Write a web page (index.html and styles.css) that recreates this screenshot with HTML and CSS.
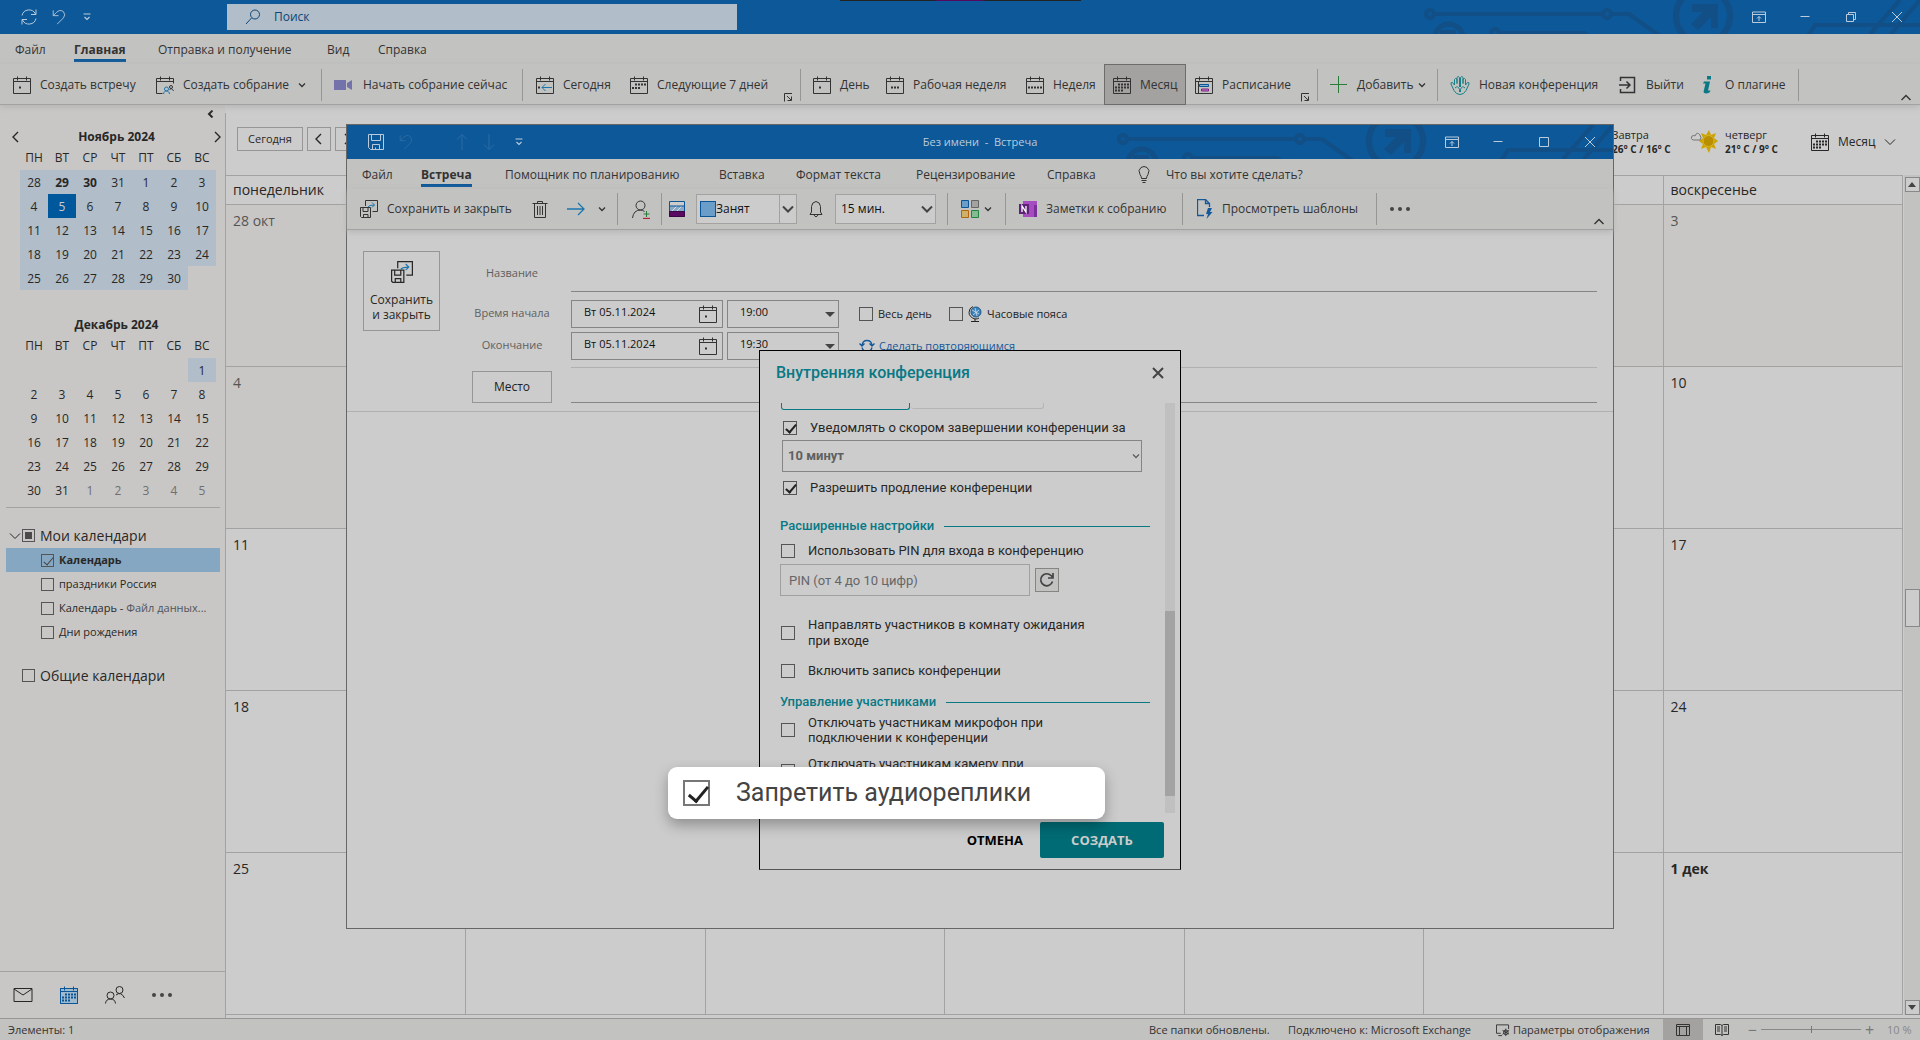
FILE: index.html
```html
<!DOCTYPE html>
<html lang="ru">
<head>
<meta charset="utf-8">
<title>Календарь</title>
<link rel="stylesheet" href="styles.css">
</head>
<body>
<svg class="sprite" aria-hidden="true">
  <defs>
    <g id="cal-frame"><path d="M.5 2.500h17v15H.5zM.5 5.500h17M4.500.500v4M13.500.500v4"/></g>
    <symbol id="cal-dot" viewBox="0 0 18 18"><use href="#cal-frame"/><path class="solid" d="M6 10.500h2v2H6z"/></symbol>
    <symbol id="cal-today" viewBox="0 0 18 18"><use href="#cal-frame"/><path class="solid" d="M2 10.500h2v2H2z"/><path class="accent" d="M16 11.500H6M9.500 8 6 11.500 9.500 15"/></symbol>
    <symbol id="cal-next" viewBox="0 0 18 18"><use href="#cal-frame"/><path class="solid" d="M5 7.500h2v2H5zM8 7.500h2v2H8zM11 7.500h2v2h-2zM14 7.500h2v2h-2zM2 11h2v2H2zM5 11h2v2H5zM8 11h2v2H8z"/></symbol>
    <symbol id="cal-work" viewBox="0 0 18 18"><use href="#cal-frame"/><path class="solid" d="M5 10.500h2v2H5zM8 10.500h2v2H8zM11 10.500h2v2h-2z"/></symbol>
    <symbol id="cal-week" viewBox="0 0 18 18"><use href="#cal-frame"/><path class="solid" d="M2 10.500h2v2H2zM5 10.500h2v2H5zM8 10.500h2v2H8zM11 10.500h2v2h-2zM14 10.500h2v2h-2z"/></symbol>
    <symbol id="cal-month" viewBox="0 0 18 18"><use href="#cal-frame"/><path class="solid" d="M5 7.500h2v2H5zM8 7.500h2v2H8zM11 7.500h2v2h-2zM14 7.500h2v2h-2zM2 10.500h2v2H2zM5 10.500h2v2H5zM8 10.500h2v2H8zM11 10.500h2v2h-2zM14 10.500h2v2h-2zM2 13.500h2v2H2zM5 13.500h2v2H5zM8 13.500h2v2H8z"/></symbol>
    <symbol id="cal-people" viewBox="0 0 18 18"><path d="M6.500 17.500H.5v-15h17v5M.5 5.500h17M4.500.500v4M13.500.500v4"/><g class="accent"><circle cx="10.500" cy="13" r="2"/><path d="M7.500 18c0-4 6-4 6 0"/></g><circle cx="15" cy="11" r="1.500"/><path d="M13.500 14c1-2 3-1.500 4 1"/></symbol>
    <symbol id="cal-list" viewBox="0 0 18 18"><use href="#cal-frame"/><path d="M3.500 5.500v12"/><path d="M4.500 8.500h9v2h-9z" fill="#7fb0d8" stroke="#0a5596"/><path d="M6.500 13h7v2h-7z" fill="#c27cc6" stroke="#7a2380"/></symbol>
    <symbol id="camera" viewBox="0 0 20 18"><path fill="#7472ab" stroke="none" d="M0 4h12v10H0zM13 7l5-3v10l-5-3z"/></symbol>
    <symbol id="plus" viewBox="0 0 18 18"><path stroke="#2a7c3b" d="M8.500 0v17M0 8.500h17"/></symbol>
    <symbol id="hands" viewBox="0 0 20 20"><g stroke="#187f86"><path d="M9.500 9V2.500q-1.500-2-2.500 0V9M7 8V4q-1.500-1.500-2.500.5V10L2.500 7.500Q.5 7 1 9l3 6.500q2 4 6 4t6-4L19 9q.5-2-1.500-1.500L15.500 10V4.500Q14.500 2.500 13 4v4M13 9V2.500q-1-2-2.500 0V12M9.500 9v3"/><path d="M5 13q3-3 4.500 1.500V17M15 13q-3-3-4.500 1.500V17"/></g></symbol>
    <symbol id="exit" viewBox="0 0 18 18"><path d="M1.500 5V1.500h14v15h-14V13M0 9h11M7.500 5.500 11 9l-3.500 3.500" stroke-width="1.500"/></symbol>
    <symbol id="info" viewBox="0 0 18 18"><path fill="#087985" stroke="none" d="M9 0h4v3.500H9zM6 5.500h6l-2 9h2.500l-1 2q-5 2-6-.5l2-8.500H5z"/></symbol>
    <symbol id="launcher" viewBox="0 0 9 9"><path d="M.5 8.500v-8H8M3 3l4 4M7.500 3.500v4h-4"/></symbol>
    <symbol id="chev-down" viewBox="0 0 8 8"><path d="M1 2.500 4 5.500 7 2.500" stroke-width="1.300"/></symbol>
    <symbol id="chev-big" viewBox="0 0 12 12"><path d="M1 3.500 6 8.500 11 3.500"/></symbol>
    <symbol id="chev-up" viewBox="0 0 12 12"><path d="M1.500 8 6 3.500 10.500 8" stroke-width="1.400"/></symbol>
    <symbol id="chev-left" viewBox="0 0 12 12"><path d="M8 1 3 6l5 5" stroke-width="1.400"/></symbol>
    <symbol id="chev-bold" viewBox="0 0 8 8"><path d="M5.500.500 2 4l3.500 3.500" stroke-width="2"/></symbol>
    <symbol id="chev-right" viewBox="0 0 12 12"><path d="M4 1l5 5-5 5" stroke-width="1.400"/></symbol>
    <symbol id="sync" viewBox="0 0 18 18"><path d="M2 7.500A7.200 7.200 0 0 1 15.500 6M16 10.500A7.200 7.200 0 0 1 2.500 12M16 1.500v5h-5M2 16.500v-5h5"/></symbol>
    <symbol id="undo" viewBox="0 0 16 18"><path d="M1.500 1.500v6h6M1.500 7.500 5 4q4-4 8-1 3 3.500 0 7l-7 7"/></symbol>
    <symbol id="customize" viewBox="0 0 8 8"><path d="M.5 1h7M1.500 4 4 6.500 6.500 4" stroke-width="1.200"/></symbol>
    <symbol id="search" viewBox="0 0 16 16"><circle cx="10" cy="5.500" r="4.500"/><path d="M6.500 9 1 15"/></symbol>
    <symbol id="ribbon-mode" viewBox="0 0 14 12"><path d="M.5 1h13v10.500H.5zM.5 3.500h13M7 10V5.500M5 7.500l2-2 2 2"/></symbol>
    <symbol id="minimize" viewBox="0 0 12 12"><path d="M1.500 5.500h9"/></symbol>
    <symbol id="restore" viewBox="0 0 12 12"><path d="M1.500 3.500h7v7h-7zM3.500 3.500v-2h7v7h-2"/></symbol>
    <symbol id="maximize" viewBox="0 0 12 12"><path d="M1.500 1.500h9v9h-9z"/></symbol>
    <symbol id="close" viewBox="0 0 12 12"><path d="M1 1l10 10M11 1 1 11"/></symbol>
    <symbol id="floppy" viewBox="0 0 18 18"><path d="M1.500 1.500h15v15h-13l-2-2zM4.500 1.500v6h9v-6M5.500 16.500v-5h7v5M8.500 16.500v-2"/></symbol>
    <symbol id="save-close" viewBox="0 0 18 18"><path d="M5.500 6V.500h12v11h-5M.5 7.500h10v10h-9l-1-1zM3 7.500v4h5v-4M3.500 17.500v-3h4.500v3"/><path class="accent" d="M8 7q1-2 6.500-2M12 2.500 14.500 5 12 7.500"/></symbol>
    <symbol id="trash" viewBox="0 0 16 18"><path d="M.5 3.500h15M5.500 3.500v-2h5v2M2.500 3.500v14h11v-14M5.500 6v9M8 6v9M10.500 6v9"/></symbol>
    <symbol id="arrow-right" viewBox="0 0 18 18"><path class="accent" d="M0 9h17M11 3l6 6-6 6" stroke-width="1.300"/></symbol>
    <symbol id="arrow-up" viewBox="0 0 14 18"><path d="M7 17V1.500M2 6.500l5-5 5 5"/></symbol>
    <symbol id="arrow-down" viewBox="0 0 14 18"><path d="M7 1v15.500M2 11.500l5 5 5-5"/></symbol>
    <symbol id="person-add" viewBox="0 0 18 19"><circle cx="8.500" cy="5.500" r="4.500"/><path d="M.5 18q1-8 8-8 2 0 4 1.500"/><path stroke="#2a7c3b" d="M14.500 11v6M11.500 14h6"/><path stroke="#b32430" d="M11 18.500h7" stroke-width="1.300"/></symbol>
    <symbol id="stripes" viewBox="0 0 16 16"><path fill="#ccc" stroke="#0a5596" d="M.5.500h15v15H.5z"/><path fill="#89a9c7" stroke="none" d="M1 5h14v5H1z"/><path stroke="#d4dbe2" d="M3 10l5-5M8 10l5-5"/><path fill="#5a0a60" stroke="#3c0545" d="M.5 10.500h15v5H.5z"/><path stroke="#0a5596" d="M1 5h14"/></symbol>
    <symbol id="bell" viewBox="0 0 14 18"><path d="M1 14.500h12L11.500 12V6.500Q11 2 7 1.500 3 2 2.500 6.500V12zM5 15q2 3.500 4 0"/></symbol>
    <symbol id="squares" viewBox="0 0 18 18"><path fill="#6b9dc9" stroke="#0a5596" d="M.5.500h7v7h-7z"/><path fill="#a3a2a1" stroke="#666" d="M10.500.500h7v7h-7z"/><path fill="#cfb06a" stroke="#b2660c" d="M.5 10.500h7v7h-7z"/><path fill="#86bb92" stroke="#22843c" d="M10.500 10.500h7v7h-7z"/></symbol>
    <symbol id="onenote" viewBox="0 0 18 18"><g stroke="none"><path fill="#a74bc0" d="M4 1h14v16H4z"/><path fill="#7b2f9a" d="M15 5h3v12h-3z"/><path fill="#5e2078" d="M0 4h10v10H0z"/></g><path stroke="#fff" d="M3 12V6l4 6V6" stroke-width="1.300"/></symbol>
    <symbol id="template" viewBox="0 0 16 20"><path stroke="#15589a" d="M7 16.500H.5V.5h8l4 4V8M8.500.500v4h4" stroke-width="1.300"/><path fill="#15589a" stroke="none" d="M11 9h4l-2 4h2.500L9.500 20l1.500-5H9z"/></symbol>
    <symbol id="bulb" viewBox="0 0 12 18"><path d="M3.500 12.500q0-2-1.500-4Q-.5 4 3 1.500q3-2 6 0Q12.500 4 10 8.500q-1.500 2-1.500 4zM3.500 14.500h5M4.500 16.500h3"/></symbol>
    <symbol id="globe" viewBox="0 0 14 16"><circle cx="8" cy="6" r="5" fill="#3d83bb" stroke="#215a8a"/><path stroke="#cfe0ee" d="M4 4l7 4M5 9l6-5M7 2l2 8" stroke-width=".8"/><path d="M5 .5Q1 2 1 6.500T7 13q3 0 4-1M7 13v2.500M3 15.500h8"/></symbol>
    <symbol id="recur" viewBox="0 0 16 16"><g stroke="#15589a" stroke-width="1.300"><path d="M3 7.500Q3.500 2.500 8 2.500t5 5M13 9.500q-1 4-5 4t-5-4M.5 5.500 3 8l2.500-2.500M10.500 5.500 13 8l2.500-2.500"/></g></symbol>
    <symbol id="refresh" viewBox="0 0 16 16"><path d="M13.500 9.500A6 6 0 1 1 12 3.500L14 5.500M14 1v5H9" stroke-width="1.700"/></symbol>
    <symbol id="mail" viewBox="0 0 20 16"><path d="M1 1.500h18v13H1zM1 2l9 6 9-6"/></symbol>
    <symbol id="nav-cal" viewBox="0 0 18 18"><path fill="#9fb9cd" d="M.5 2.500h17v15H.5z"/><use href="#cal-month"/></symbol>
    <symbol id="people" viewBox="0 0 20 18"><circle cx="5.500" cy="9.500" r="3.500"/><path d="M.5 17.500q.5-4.500 5-4.500t5 4.500"/><circle cx="14.500" cy="4" r="3.500"/><path d="M11 9q5-4 8.500 3"/></symbol>
    <symbol id="display" viewBox="0 0 15 14"><path d="M5 10.500H.5v-9h13V6M2.500 13h4"/><circle cx="10.500" cy="9.500" r="2.500"/><path d="M10.500 5.500v8M7 7.500l7 4M7 11.500l7-4"/></symbol>
    <symbol id="view-normal" viewBox="0 0 14 12"><path d="M.5.500h13v11H.5zM.5 2.500h13M3.500 2.500v9M10.500 2.500v9"/></symbol>
    <symbol id="view-read" viewBox="0 0 14 12"><path d="M7 1.500 5.500.500h-5v10h5L7 11.500l1.500-1h5V.500h-5zM7 1.500v10M2 3h3M2 5h3M2 7h3M9 3h3M9 5h3M9 7h3"/></symbol>
    <symbol id="sunny" viewBox="0 0 28 24"><path fill="#cca300" stroke="none" d="M19 0l2 5 5-2-2 5 4 3-4 3 2 5-5-2-2 6-3-6-5 2 2-5-4-3 4-3-2-5 5 2z"/><circle cx="18.500" cy="11" r="5.500" fill="#b98f00" stroke="#d8b62a"/><path stroke="#777" fill="#ccc" d="M3 10q-3-1-1-4 2-1 3 0Q7 1 10 5q2 3 0 5z"/></symbol>
    <symbol id="circuit" viewBox="0 0 500 34"><g fill="none" stroke="#114f86" stroke-width="4"><circle cx="10" cy="14" r="4"/><path d="M14 14h169M191 14h18l31 22"/><circle cx="187" cy="14" r="4"/><circle cx="29" cy="38" r="14" stroke-width="5"/><path d="M22 42V32h14"/><circle cx="75" cy="33" r="4"/><path d="M79 33h85l12 8M388 36l7-11h105M450 34 480 0M471 34 500 0"/><circle cx="283" cy="16" r="27" stroke-width="6"/></g><path fill="#114f86" d="M272 4h26v24h-7v-11l-13 13-7-6 12-12h-11z"/></symbol>
  </defs>
</svg>

<div class="app">
  <header class="titlebar">
    <svg class="circuit"><use href="#circuit"/></svg>
    <span class="notch"><i></i></span>
    <div class="quick">
      <button aria-label="Обновить"><svg class="i18"><use href="#sync"/></svg></button>
      <button aria-label="Отменить"><svg class="i16"><use href="#undo"/></svg></button>
      <button aria-label="Настройка панели"><svg class="i8"><use href="#customize"/></svg></button>
    </div>
    <label class="searchbox"><svg class="i16"><use href="#search"/></svg><input type="text" aria-label="Поиск" placeholder="Поиск"></label>
    <div class="controls">
      <button aria-label="Параметры ленты"><svg class="i14"><use href="#ribbon-mode"/></svg></button>
      <button aria-label="Свернуть"><svg class="i12"><use href="#minimize"/></svg></button>
      <button aria-label="Восстановить"><svg class="i12"><use href="#restore"/></svg></button>
      <button aria-label="Закрыть"><svg class="i12"><use href="#close"/></svg></button>
    </div>
  </header>

  <nav class="tabs main-tabs">
    <button>Файл</button><button class="current">Главная</button><button>Отправка и получение</button><button>Вид</button><button>Справка</button>
  </nav>
  <div class="ribbon main-ribbon">
    <button><svg class="i18"><use href="#cal-dot"/></svg>Создать встречу</button>
    <button><svg class="i18"><use href="#cal-people"/></svg>Создать собрание<svg class="i8"><use href="#chev-down"/></svg></button>
    <i class="sep"></i>
    <button><svg class="i20"><use href="#camera"/></svg>Начать собрание сейчас</button>
    <i class="sep"></i>
    <button><svg class="i18"><use href="#cal-today"/></svg>Сегодня</button>
    <button><svg class="i18"><use href="#cal-next"/></svg>Следующие 7 дней</button>
    <button class="launch" aria-label="Перейти"><svg class="i9"><use href="#launcher"/></svg></button>
    <i class="sep"></i>
    <button><svg class="i18"><use href="#cal-dot"/></svg>День</button>
    <button><svg class="i18"><use href="#cal-work"/></svg>Рабочая неделя</button>
    <button><svg class="i18"><use href="#cal-week"/></svg>Неделя</button>
    <button class="pressed"><svg class="i18"><use href="#cal-month"/></svg>Месяц</button>
    <button class="inset"><svg class="i18"><use href="#cal-list"/></svg>Расписание</button>
    <button class="launch" aria-label="Упорядочить"><svg class="i9"><use href="#launcher"/></svg></button>
    <i class="sep"></i>
    <button><svg class="i18"><use href="#plus"/></svg>Добавить<svg class="i8 near"><use href="#chev-down"/></svg></button>
    <i class="sep"></i>
    <button><svg class="i20"><use href="#hands"/></svg>Новая конференция</button>
    <button><svg class="i18"><use href="#exit"/></svg>Выйти</button>
    <button><svg class="i18"><use href="#info"/></svg>О плагине</button>
    <i class="sep"></i>
    <button class="fold" aria-label="Свернуть ленту"><svg class="i12"><use href="#chev-up"/></svg></button>
  </div>

  <div class="body">
    <aside class="sidebar">
      <button class="collapse" aria-label="Свернуть область"><svg class="i8"><use href="#chev-bold"/></svg></button>
      <div class="month-head"><button aria-label="Назад"><svg class="i12"><use href="#chev-left"/></svg></button><h2>Ноябрь 2024</h2><button aria-label="Вперед"><svg class="i12"><use href="#chev-right"/></svg></button></div>
      <table class="mini">
        <thead><tr><th>ПН</th><th>ВТ</th><th>СР</th><th>ЧТ</th><th>ПТ</th><th>СБ</th><th>ВС</th></tr></thead>
        <tbody>
          <tr class="on"><td>28</td><td><b>29</b></td><td><b>30</b></td><td>31</td><td>1</td><td>2</td><td>3</td></tr>
          <tr class="on"><td>4</td><td class="today">5</td><td>6</td><td>7</td><td>8</td><td>9</td><td>10</td></tr>
          <tr class="on"><td>11</td><td>12</td><td>13</td><td>14</td><td>15</td><td>16</td><td>17</td></tr>
          <tr class="on"><td>18</td><td>19</td><td>20</td><td>21</td><td>22</td><td>23</td><td>24</td></tr>
          <tr class="on"><td>25</td><td>26</td><td>27</td><td>28</td><td>29</td><td>30</td><td class="off"></td></tr>
        </tbody>
      </table>
      <div class="month-head second"><h2>Декабрь 2024</h2></div>
      <table class="mini">
        <thead><tr><th>ПН</th><th>ВТ</th><th>СР</th><th>ЧТ</th><th>ПТ</th><th>СБ</th><th>ВС</th></tr></thead>
        <tbody>
          <tr><td></td><td></td><td></td><td></td><td></td><td></td><td class="mark">1</td></tr>
          <tr><td>2</td><td>3</td><td>4</td><td>5</td><td>6</td><td>7</td><td>8</td></tr>
          <tr><td>9</td><td>10</td><td>11</td><td>12</td><td>13</td><td>14</td><td>15</td></tr>
          <tr><td>16</td><td>17</td><td>18</td><td>19</td><td>20</td><td>21</td><td>22</td></tr>
          <tr><td>23</td><td>24</td><td>25</td><td>26</td><td>27</td><td>28</td><td>29</td></tr>
          <tr><td>30</td><td>31</td><td class="dim">1</td><td class="dim">2</td><td class="dim">3</td><td class="dim">4</td><td class="dim">5</td></tr>
        </tbody>
      </table>
      <div class="tree">
        <label class="group"><svg class="i12"><use href="#chev-big"/></svg><input type="checkbox" class="part">Мои календари</label>
        <label class="leaf chosen"><input type="checkbox" checked>Календарь</label>
        <label class="leaf"><input type="checkbox">праздники Россия</label>
        <label class="leaf"><input type="checkbox"><span>Календарь - <small>Файл данных...</small></span></label>
        <label class="leaf"><input type="checkbox">Дни рождения</label>
        <label class="group shared"><input type="checkbox">Общие календари</label>
      </div>
      <nav class="modules">
        <button aria-label="Почта"><svg class="i20"><use href="#mail"/></svg></button>
        <button class="blue" aria-label="Календарь"><svg class="i18"><use href="#nav-cal"/></svg></button>
        <button aria-label="Люди"><svg class="i20"><use href="#people"/></svg></button>
        <button class="dots" aria-label="Еще"><i></i><i></i><i></i></button>
      </nav>
    </aside>

    <main class="content">
      <div class="tools">
        <button class="box today-btn">Сегодня</button><button class="box" aria-label="Предыдущий"><svg class="i12"><use href="#chev-left"/></svg></button><button class="box" aria-label="Следующий"><svg class="i12"><use href="#chev-right"/></svg></button>
        <div class="forecast">
          <div class="day"><svg class="sun"><use href="#sunny"/></svg><p>Завтра<b>26° C / 16° C</b></p></div>
          <div class="day"><svg class="sun"><use href="#sunny"/></svg><p>четверг<b>21° C / 9° C</b></p></div>
          <button class="view"><svg class="i18"><use href="#cal-month"/></svg>Месяц<svg class="i12"><use href="#chev-big"/></svg></button>
        </div>
      </div>
      <div class="sheet">
        <table class="month">
          <thead><tr><th>понедельник</th><th></th><th></th><th></th><th></th><th></th><th>воскресенье</th></tr></thead>
          <tbody>
            <tr class="past"><td>28 окт</td><td></td><td></td><td></td><td></td><td></td><td>3</td></tr>
            <tr><td class="gone">4</td><td></td><td></td><td></td><td></td><td></td><td>10</td></tr>
            <tr><td>11</td><td></td><td></td><td></td><td></td><td></td><td>17</td></tr>
            <tr><td>18</td><td></td><td></td><td></td><td></td><td></td><td>24</td></tr>
            <tr><td>25</td><td></td><td></td><td></td><td></td><td></td><td><b>1 дек</b></td></tr>
          </tbody>
        </table>
        <div class="scroll"><button class="up" aria-label="Вверх"></button><span class="thumb"></span><button class="down" aria-label="Вниз"></button></div>
      </div>
    </main>
  </div>

  <footer class="status">
    <span>Элементы: 1</span><span>Все папки обновлены.</span><span>Подключено к: Microsoft Exchange</span>
    <button><svg class="i14"><use href="#display"/></svg>Параметры отображения</button>
    <button class="active" aria-label="Обычный"><svg class="i14"><use href="#view-normal"/></svg></button>
    <button class="read" aria-label="Чтение"><svg class="i14"><use href="#view-read"/></svg></button>
    <label class="zoom"><span>−</span><input type="range" aria-label="Масштаб" min="10" max="190" value="100"><span>+</span></label>
    <span class="pct">10 %</span>
  </footer>

  <section class="window">
    <header class="titlebar">
      <svg class="circuit"><use href="#circuit"/></svg>
      <div class="quick">
        <button aria-label="Сохранить"><svg class="i18"><use href="#floppy"/></svg></button>
        <button class="faded" aria-label="Отменить"><svg class="i16"><use href="#undo"/></svg></button>
        <button class="faded far" aria-label="Предыдущий элемент"><svg class="i14t"><use href="#arrow-up"/></svg></button>
        <button class="faded" aria-label="Следующий элемент"><svg class="i14t"><use href="#arrow-down"/></svg></button>
        <button aria-label="Настройка панели"><svg class="i8"><use href="#customize"/></svg></button>
      </div>
      <h1>Без имени&nbsp; -&nbsp; Встреча</h1>
      <div class="controls">
        <button aria-label="Параметры ленты"><svg class="i14"><use href="#ribbon-mode"/></svg></button>
        <button aria-label="Свернуть"><svg class="i12"><use href="#minimize"/></svg></button>
        <button aria-label="Развернуть"><svg class="i12"><use href="#maximize"/></svg></button>
        <button aria-label="Закрыть"><svg class="i12"><use href="#close"/></svg></button>
      </div>
    </header>
    <nav class="tabs win-tabs">
      <button>Файл</button><button class="current">Встреча</button><button>Помощник по планированию</button><button>Вставка</button><button>Формат текста</button><button>Рецензирование</button><button>Справка</button>
      <button class="tell"><svg class="bulb"><use href="#bulb"/></svg>Что вы хотите сделать?</button>
    </nav>
    <div class="ribbon win-ribbon">
      <button><svg class="i18"><use href="#save-close"/></svg>Сохранить и закрыть</button>
      <button aria-label="Удалить"><svg class="i16t"><use href="#trash"/></svg></button>
      <button aria-label="Переслать"><svg class="i18"><use href="#arrow-right"/></svg><svg class="i8 tight"><use href="#chev-down"/></svg></button>
      <i class="sep"></i>
      <button aria-label="Пригласить"><svg class="i18t"><use href="#person-add"/></svg></button>
      <i class="sep"></i>
      <span class="cell"><svg class="i16"><use href="#stripes"/></svg></span>
      <span class="combo busy"><i class="swatch"></i><select aria-label="Показать как"><option>Занят</option></select><svg class="i12"><use href="#chev-big"/></svg></span>
      <span class="cell"><svg class="i14t"><use href="#bell"/></svg></span>
      <span class="combo"><select aria-label="Напоминание"><option>15 мин.</option></select><svg class="i12"><use href="#chev-big"/></svg></span>
      <i class="sep"></i>
      <button aria-label="Категории"><svg class="i18"><use href="#squares"/></svg><svg class="i8 near"><use href="#chev-down"/></svg></button>
      <i class="sep"></i>
      <button><svg class="i18"><use href="#onenote"/></svg>Заметки к собранию</button>
      <i class="sep"></i>
      <button><svg class="tpl"><use href="#template"/></svg>Просмотреть шаблоны</button>
      <i class="sep"></i>
      <button class="dots" aria-label="Другие команды"><i></i><i></i><i></i></button>
      <button class="fold" aria-label="Свернуть ленту"><svg class="i12"><use href="#chev-up"/></svg></button>
    </div>
    <form class="form">
      <button type="button" class="box save"><svg class="i22"><use href="#save-close"/></svg>Сохранить<br>и закрыть</button>
      <div class="fields">
        <label for="subject">Название</label><input id="subject" class="line subject" type="text">
        <label for="start">Время начала</label>
        <div class="row">
          <span class="date"><input id="start" type="text" value="Вт 05.11.2024"><svg class="i18"><use href="#cal-dot"/></svg></span>
          <span class="time"><select aria-label="Время начала, часы"><option>19:00</option></select></span>
          <label class="tick"><input type="checkbox">Весь день</label>
          <label class="tick zone"><input type="checkbox"><svg class="globe"><use href="#globe"/></svg>Часовые пояса</label>
        </div>
        <label for="end">Окончание</label>
        <div class="row">
          <span class="date"><input id="end" type="text" value="Вт 05.11.2024"><svg class="i18"><use href="#cal-dot"/></svg></span>
          <span class="time"><select aria-label="Время окончания"><option>19:30</option></select></span>
          <a href="#" class="repeat"><svg class="i16"><use href="#recur"/></svg>Сделать повторяющимся</a>
        </div>
        <button type="button" class="box place">Место</button><input class="line where" type="text" aria-label="Место">
      </div>
    </form>
  </section>

  <section class="dialog" role="dialog" aria-labelledby="dlg-title">
    <header><h2 id="dlg-title">Внутренняя конференция</h2><button aria-label="Закрыть"><svg class="i12"><use href="#close"/></svg></button></header>
    <div class="pane">
      <div class="settings">
        <div class="segments"><i class="lit"></i><i></i></div>
        <label class="opt in"><input type="checkbox" checked>Уведомлять о скором завершении конференции за</label>
        <span class="minutes"><select aria-label="Минуты"><option>10 минут</option></select><svg class="i8"><use href="#chev-down"/></svg></span>
        <label class="opt in extend"><input type="checkbox" checked>Разрешить продление конференции</label>
        <h3>Расширенные настройки</h3>
        <label class="opt"><input type="checkbox">Использовать PIN для входа в конференцию</label>
        <div class="pin"><input type="text" placeholder="PIN (от 4 до 10 цифр)" aria-label="PIN"><button aria-label="Создать PIN"><svg class="i16"><use href="#refresh"/></svg></button></div>
        <label class="opt two"><input type="checkbox"><span>Направлять участников в комнату ожидания<br>при входе</span></label>
        <label class="opt rec"><input type="checkbox">Включить запись конференции</label>
        <h3 class="manage">Управление участниками</h3>
        <label class="opt mic"><input type="checkbox"><span>Отключать участникам микрофон при<br>подключении к конференции</span></label>
        <label class="opt cam"><input type="checkbox"><span>Отключать участникам камеру при</span></label>
      </div>
      <div class="track"><span></span></div>
    </div>
    <footer><button class="cancel">ОТМЕНА</button><button class="create">СОЗДАТЬ</button></footer>
  </section>

  <label class="callout"><input type="checkbox" checked>Запретить аудиореплики</label>
</div>
</body>
</html>
```
FILE: styles.css
```css
* { box-sizing: border-box; }
body { margin: 0; font: 12px/16px "Open Sans", "Noto Sans", sans-serif; color: #282726; background: #ccc; }
button, input, select { font: inherit; color: inherit; background: none; border: 0; margin: 0; padding: 0; }
button { display: flex; align-items: center; white-space: nowrap; text-align: left; }
h1, h2, h3, p { margin: 0; font-size: inherit; }
select { appearance: none; width: 100%; height: 100%; }
svg { flex: none; fill: none; stroke: currentColor; display: block; }
.solid { fill: currentColor; stroke: none; }
.accent { stroke: #1b76b0; }
.sprite { position: absolute; width: 0; height: 0; }
.i8 { width: 8px; height: 8px; } .i9 { width: 9px; height: 9px; }
.i12 { width: 12px; height: 12px; } .i14 { width: 14px; height: 14px; }
.i14t { width: 14px; height: 18px; } .i16 { width: 16px; height: 16px; }
.i16t { width: 16px; height: 18px; } .i18 { width: 18px; height: 18px; }
.i18t { width: 18px; height: 19px; } .i20 { width: 20px; height: 20px; } .i22 { width: 22px; height: 22px; }

input[type=checkbox] { appearance: none; flex: none; width: 14px; height: 14px; border: 1px solid #555; position: relative; }
input[type=checkbox]:checked::after { content: ""; position: absolute; left: 4px; top: 0; width: 4px; height: 9px; border: solid #222; border-width: 0 2px 2px 0; transform: rotate(40deg); }

.app { position: relative; display: flex; flex-direction: column; min-height: 100vh; overflow: hidden; }

.titlebar { position: relative; display: flex; align-items: center; height: 34px; background: #0d5898; color: #b9cbdc; }
.circuit { position: absolute; right: 0; top: 0; width: 500px; height: 34px; stroke: none; }
.notch { position: absolute; left: 840px; top: 0; width: 241px; height: 1px; background: #222; }
.notch i { display: block; width: 48px; height: 1px; margin-left: 96px; background: #550a60; }
.quick { display: flex; align-items: center; gap: 13px; padding-left: 20px; width: 227px; }
.quick .i8 { margin-left: 3px; }
.searchbox { display: flex; align-items: center; gap: 13px; width: 510px; height: 26px; padding-left: 18px; background: #b1bdc8; color: #0b4778; }
.searchbox input { flex: 1; }
.searchbox input::placeholder { color: #0b4778; opacity: 1; }
.controls { position: relative; display: flex; margin-left: auto; }
.controls button { width: 46px; height: 34px; justify-content: center; }

.tabs { display: grid; height: 30px; padding: 8px 0 0 15px; background: #c2c2c1; color: #333; }
.tabs button { height: 20px; justify-self: start; padding-bottom: 1px; border-bottom: 3px solid transparent; }
.tabs .current { font-weight: 700; border-color: #0d5898; }
.main-tabs { grid-template-columns: 59px 84px 169px 51px auto; }
.ribbon { position: relative; display: grid; align-items: center; height: 41px; padding-left: 13px; background: #c2c2c1; border-bottom: 1px solid #a3a2a1; box-shadow: 0 2px 6px #b4b4b4; color: #333; }
.ribbon button { gap: 9px; height: 40px; }
.ribbon .near { margin-left: -4px; }
.main-ribbon { grid-template-columns: 143px 165px 13px 188px 14px 94px 154px 16px 13px 73px 140px 78px 82px 115px 16px 13px 107px 13px 169px 79px 100px 14px 1fr; }
.sep { width: 1px; height: 32px; background: #979695; }
.ribbon .pressed { height: 41px; padding-left: 8px; background: #a3a2a1; border: 1px solid #6d6c6b; }
.ribbon .inset { padding-left: 9px; }
.ribbon .launch { padding-top: 25px; }
.ribbon .fold { justify-self: end; padding: 26px 8px 0 0; }

.body { flex: 1; display: grid; grid-template-columns: 225px 1fr; }
.sidebar { display: flex; flex-direction: column; background: #c8c7c6; }
.collapse { align-self: flex-end; margin: 5px 10px 0 0; height: 8px; }
.month-head { display: flex; align-items: center; justify-content: space-between; height: 16px; margin: 11px 2px 4px 10px; }
.month-head h2 { font-weight: 700; }
.second { justify-content: center; margin: 27px 2px 4px 10px; }
.mini { width: 196px; margin-left: 20px; border-collapse: collapse; table-layout: fixed; text-align: center; }
.mini th { height: 21px; padding: 1px 0 0; font-weight: 400; vertical-align: top; }
.mini td { height: 24px; padding: 1px 0 0; }
.mini .on, .mini .mark { background: #b1bdc8; }
.mini .off { background: #c8c7c6; }
.mini .today { background: #00589c; color: #ccc; }
.mini .dim { color: #706f6e; }
.tree { margin: 5px 5px 0 6px; padding-top: 15px; border-top: 1px solid #a3a2a1; flex: 1; }
.tree label { display: flex; align-items: center; }
.tree input[type=checkbox] { width: 13px; height: 13px; }
.tree input[type=checkbox]:checked::after { border-color: #444; border-width: 0 1px 1px 0; }
.group { height: 25px; gap: 5px; padding-left: 3px; font-size: 14px; line-height: 20px; }
.group .i12 { margin-right: -4px; }
.shared { margin-top: 19px; padding-left: 16px; }
.part::after { content: ""; position: absolute; inset: 2px; background: #4a4a4a; }
.leaf { height: 24px; gap: 5px; padding-left: 35px; font-size: 11px; }
.leaf small { font-size: 11px; color: #50555c; }
.chosen { background: #86a7c1; font-weight: 700; }
.modules { display: flex; align-items: center; gap: 27px; height: 47px; padding-left: 13px; border-top: 1px solid #a3a2a1; }
.modules .blue { color: #0a5596; }
.dots { gap: 4px; }
.ribbon .dots { gap: 4px; }
.dots i { width: 4px; height: 4px; border-radius: 2px; background: #444; }

.content { display: flex; flex-direction: column; margin-top: 8px; padding-bottom: 3px; border-left: 1px solid #a3a2a1; }
.tools { display: flex; height: 62px; padding: 14px 0 0 11px; gap: 4px; }
.box { height: 24px; width: 24px; justify-content: center; border: 1px solid #979695; }
.today-btn { width: 66px; font-size: 11px; }
.forecast { display: grid; grid-template-columns: 113px 121px 109px; align-items: center; height: 22px; margin-left: auto; font-size: 11px; }
.day { display: flex; align-items: center; gap: 7px; }
.day b { display: block; font-size: 10px; }
.day p { line-height: 15px; white-space: nowrap; }
.sun { width: 28px; height: 24px; }
.view { gap: 9px; font-size: 12px; }
.sheet { flex: 1; display: flex; gap: 1px; }
.month { flex: 1; width: 100%; border-collapse: collapse; table-layout: fixed; text-align: left; vertical-align: top; font-size: 14px; line-height: 20px; }
.month th { height: 29px; padding: 0 7px; font-weight: 400; border: solid #a3a2a1; border-width: 1px 1px 1px 0; }
.month td { height: 161px; padding: 6px 7px; vertical-align: top; border: solid #a3a2a1; border-width: 1px 1px 1px 0; }
.past, .gone { background: #c8c7c5; color: #555; }
.scroll { display: flex; flex-direction: column; justify-content: space-between; align-items: center; width: 16px; padding: 2px 0 0; background: #c2c2c1; }
.scroll button, .thumb { width: 15px; height: 15px; background: #ccc; border: 1px solid #888; justify-content: center; }
.scroll .thumb { height: 38px; margin-top: 24px; }
.up::after, .down::after { content: ""; border: 4px solid transparent; border-top: 0; border-bottom: 5px solid #444; }
.down::after { border-bottom: 0; border-top: 5px solid #444; }

.status { display: grid; grid-template-columns: 1141px 139px 208px 167px 40px 38px 146px 1fr; align-items: center; height: 22px; padding-left: 8px; background: #c2c2c1; border-top: 1px solid #979695; font-size: 11px; color: #333; white-space: nowrap; }
.status button { gap: 3px; height: 21px; }
.status .active { justify-content: center; background: #a3a2a1; }
.status .read { justify-content: center; }
.zoom { display: flex; align-items: center; justify-content: center; gap: 4px; height: 21px; font-size: 16px; color: #777; padding-right: 6px; }
.zoom input { appearance: none; width: 100px; height: 9px; background: linear-gradient(#888, #888) center / 100% 1px no-repeat; }
.zoom input::-webkit-slider-thumb { appearance: none; width: 1px; height: 7px; background: #777; }
.pct { color: #888; }

.window { position: absolute; left: 346px; right: 306px; top: 124px; height: 805px; background: #ccc; border: 1px solid #666; }
.window h1 { position: absolute; left: 0; right: 0; text-align: center; font-weight: 400; font-size: 11px; }
.window .quick { width: 240px; }
.window .faded { color: #2c6ca5; }
.window .far { margin-left: 28px; }
.window .quick .i8 { margin-left: 6px; }
.win-tabs { grid-template-columns: 59px 84px 214px 77px 120px 131px 91px auto; }
.tabs .tell { gap: 16px; }
.bulb { width: 12px; height: 18px; }
.win-ribbon { grid-template-columns: 172px 35px 50px 15px 29px 8px 27px 113px 26px 112px 14px 44px 14px 163px 15px 179px 14px 30px 1fr; }
.ribbon .tight { margin-left: 4px; }
.tpl { width: 16px; height: 20px; }
.combo { position: relative; display: flex; align-items: center; width: 101px; height: 30px; border: 1px solid #a3a2a1; background: #ccc; color: #111; padding-left: 5px; }
.combo .i12 { position: absolute; right: 2px; stroke-width: 2; color: #444; }
.busy { padding-left: 3px; }
.busy::after { content: ""; position: absolute; right: 16px; top: 0; bottom: 0; border-left: 1px solid #a3a2a1; }
.swatch { flex: none; width: 16px; height: 16px; background: #6b9dc9; border: 1px solid #0a5596; }
.form { display: flex; align-items: flex-start; gap: 32px; height: 182px; padding: 21px 16px 0; border-bottom: 1px solid #b0b0b0; }
.save { flex-direction: column; width: 77px; height: 80px; line-height: 15px; text-align: center; }
.save svg { margin-bottom: 9px; }
.fields { flex: 1; display: grid; grid-template-columns: 80px 1fr; column-gap: 19px; align-items: center; justify-items: center; color: #606060; }
.fields > label { padding-bottom: 6px; font-size: 11px; white-space: nowrap; }
.line { width: 100%; border-bottom: 1px solid #868584; }
.subject { height: 41px; margin-bottom: 8px; }
.row { display: flex; align-items: center; justify-self: start; height: 32px; padding-bottom: 4px; color: #222; }
.date, .time { display: flex; align-items: center; width: 152px; height: 28px; border: 1px solid #868584; color: #111; font-size: 11px; }
.date { padding: 0 5px 0 12px; margin-right: 4px; }
.date input { width: 100%; padding-bottom: 4px; }
.date svg { color: #333; }
.time { width: 112px; padding-left: 12px; position: relative; }
.time select { padding-bottom: 4px; }
.time::after { content: ""; position: absolute; right: 3px; top: 11px; border: 5px solid transparent; border-top-color: #444; border-bottom: 0; }
.tick { display: flex; align-items: center; gap: 5px; width: 90px; margin-left: 20px; font-size: 11px; }
.zone { width: 160px; margin-left: 0; }
.globe { width: 14px; height: 16px; }
.repeat { display: flex; align-items: center; gap: 4px; margin-left: 20px; color: #15589a; font-size: 11px; text-decoration: none; }
.place { width: 80px; height: 32px; margin-top: 6px; color: #222; }
.where { height: 36px; margin-top: 3px; border-top: 1px solid #b0b0b0; }

.dialog { position: absolute; left: 759px; top: 350px; width: 422px; height: 520px; background: #ccc; border: 1px solid #000; border-bottom-color: #555; font-family: Roboto, sans-serif; font-size: 13px; }
.dialog header { display: flex; justify-content: space-between; height: 52px; padding: 12px 16px 0 16px; color: #087985; }
.dialog h2 { font-size: 16px; line-height: 20px; font-weight: 500; }
.dialog header button { height: 20px; color: #444; }
.dialog header svg { stroke-width: 2; }
.pane { display: flex; height: 410px; overflow: hidden; padding-right: 5px; }
.settings { flex: 1; padding-left: 20px; }
.segments { display: flex; padding-left: 1px; margin-bottom: 6px; gap: 1px; }
.segments i { width: 133px; height: 6px; border: solid #b5b5b5; border-width: 0 1px 1px 0; border-radius: 0 0 3px 3px; }
.segments .lit { width: 129px; height: 7px; border-color: #087985; border-width: 0 1px 1px 1px; }
.opt { display: flex; align-items: center; gap: 13px; min-height: 24px; padding-left: 1px; }
.in { padding-left: 3px; }
.minutes { position: relative; display: flex; align-items: center; width: 360px; height: 32px; margin-left: 2px; padding-left: 5px; border: 1px solid #868584; font-weight: 700; color: #606060; }
.minutes svg { position: absolute; right: 1px; }
.extend { margin-top: 4px; }
.dialog h3 { display: flex; align-items: center; gap: 10px; width: 370px; margin: 18px 0 5px; font-weight: 500; color: #087985; white-space: nowrap; }
.dialog h3::after { content: ""; flex: 1; height: 1px; background: #087985; }
.pin { display: flex; align-items: center; gap: 5px; margin: 1px 0 21px; }
.pin input { width: 250px; height: 32px; padding-left: 8px; border: 1px solid #a0a0a0; }
.pin input::placeholder { color: #666; opacity: 1; }
.pin button { width: 24px; height: 24px; justify-content: center; background: #c2c2c1; border: 1px solid #868584; color: #444; }
.rec { margin-top: 10px; }
.dialog .manage { margin: 11px 0 5px; }
.mic { line-height: 15px; }
.cam { margin-top: 11px; align-items: flex-start; }
.cam input[type=checkbox] { margin-top: 8px; }
.track { width: 10px; padding-top: 208px; background: #c0c0c0; }
.track span { display: block; height: 185px; background: #a3a3a3; }
.dialog footer { display: flex; justify-content: flex-end; align-items: center; gap: 17px; height: 54px; padding-right: 16px; font-family: "Open Sans", sans-serif; font-weight: 700; }
.cancel { color: #000; }
.create { width: 124px; height: 36px; justify-content: center; background: #006b74; color: #ccc; border-radius: 2px; }

.callout { position: absolute; left: 668px; top: 767px; width: 437px; height: 52px; display: flex; align-items: center; gap: 26px; padding-left: 15px; background: #fff; border-radius: 9px; box-shadow: 0 6px 14px rgba(0, 0, 0, .3); font: 25px/30px Roboto, sans-serif; color: #444; }
.callout input[type=checkbox] { width: 27px; height: 26px; border: 2px solid #777; }
.callout input[type=checkbox]:checked::after { left: 8px; top: 0; width: 8px; height: 17px; border-width: 0 3px 3px 0; }
```
